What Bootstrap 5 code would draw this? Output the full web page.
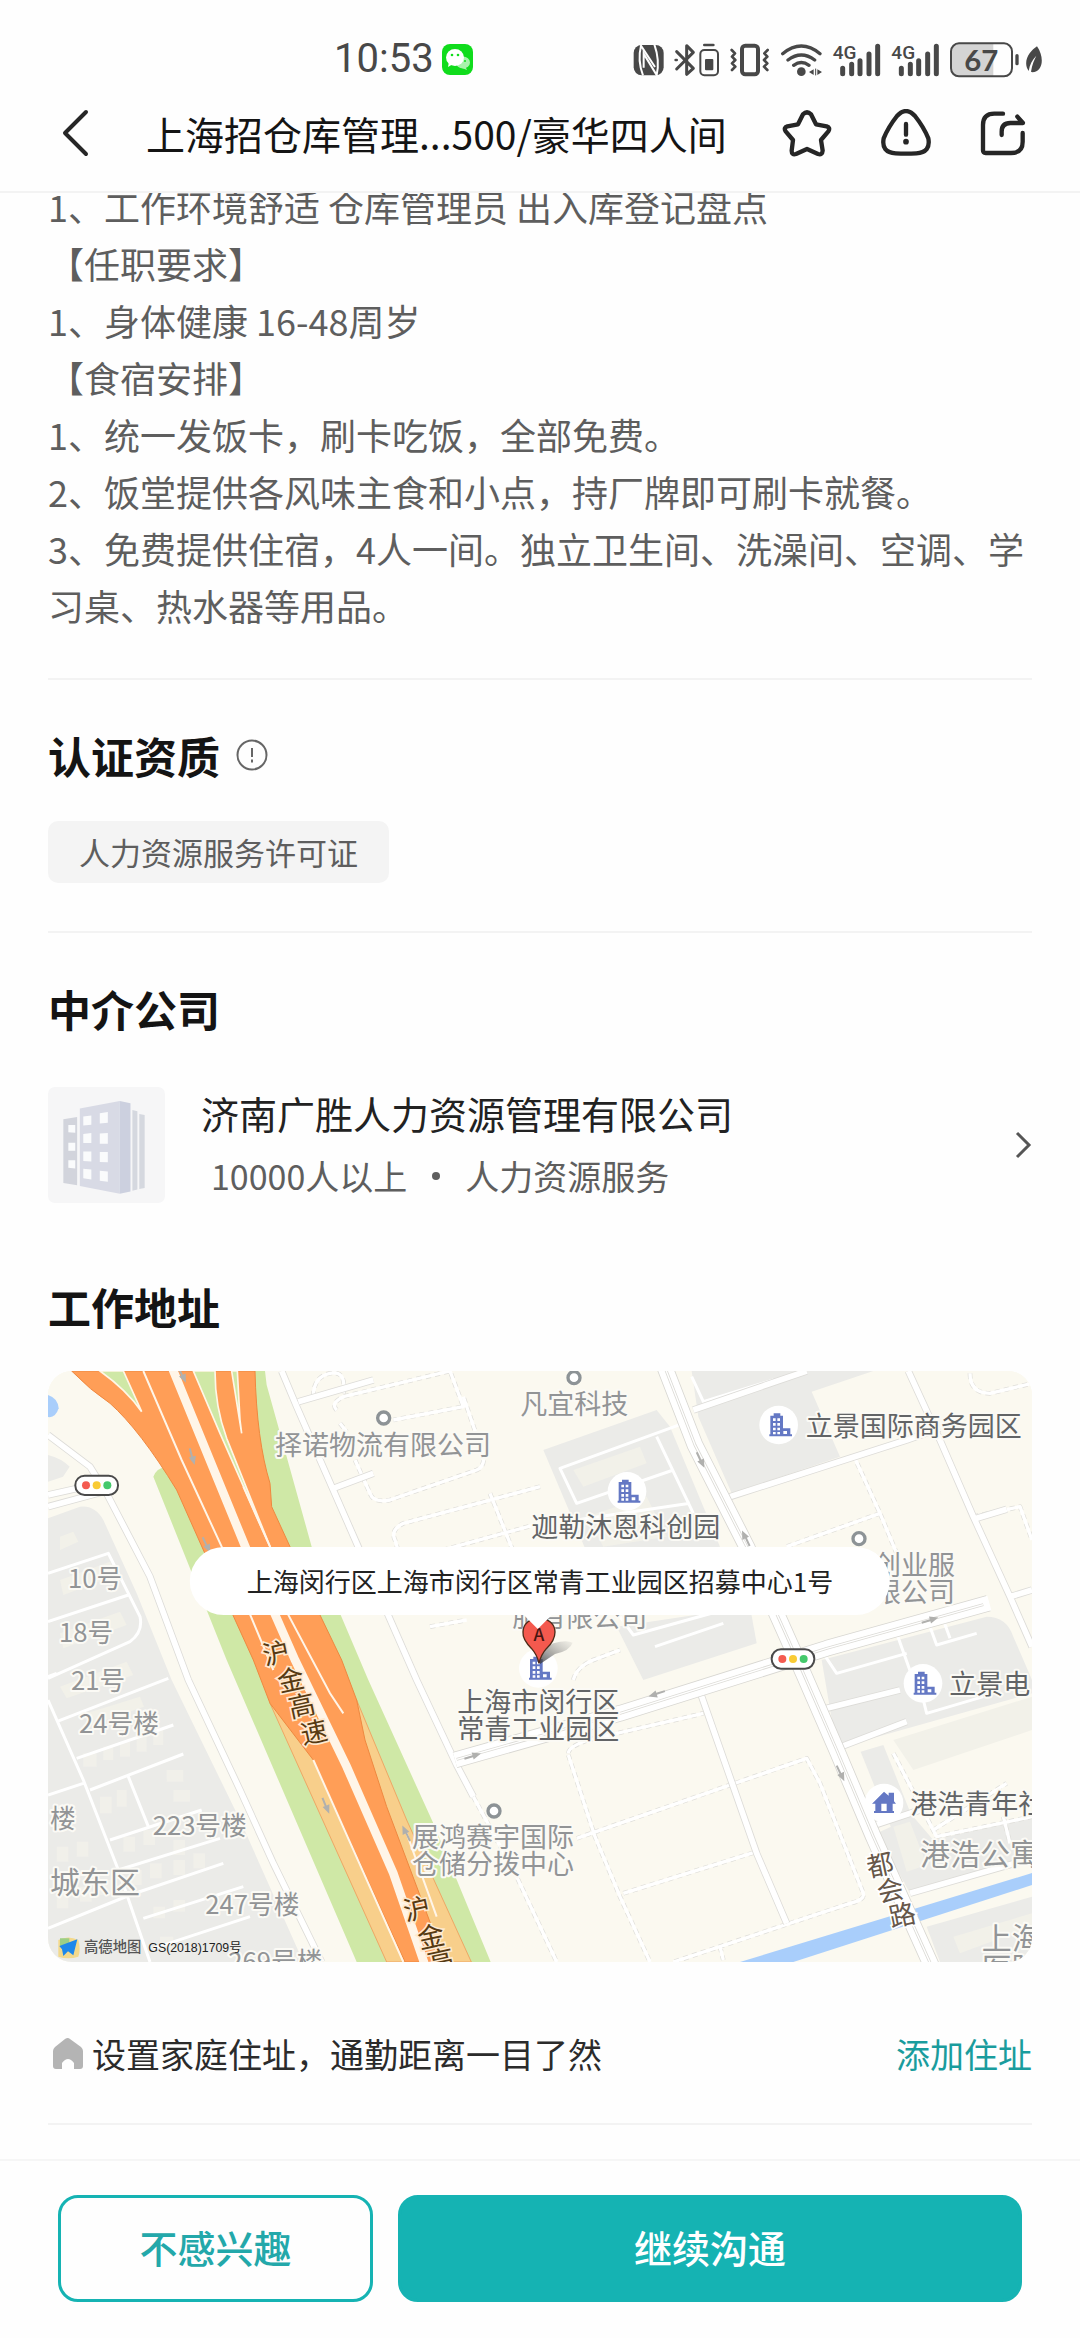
<!DOCTYPE html>
<html lang="zh-CN">
<head>
<meta charset="utf-8">
<meta name="viewport" content="width=device-width, initial-scale=1">
<title>职位详情</title>
<link href="https://cdn.jsdelivr.net/npm/bootstrap@5.3.0/dist/css/bootstrap.min.css" rel="stylesheet">
<style>
:root{--teal:#15b3b3;--ink:#141414;--soft:#5e5e5e;--rule:#f3f3f3}
body{font-family:"Noto Sans CJK SC","Noto Sans",sans-serif;color:var(--ink);background:#fefefe}
svg{display:block;flex:none}
.app-head{background:#fefefe;border-bottom:2px solid var(--rule);z-index:10;height:193px}
.status-row{height:80px;padding:38px 36px 0 334px;color:#484848}
.clock{font-size:40px;line-height:40px;font-family:Roboto,"Noto Sans",sans-serif}
.title-row{height:106px;padding:0 54px 0 60px}
.job-title{font-size:39px;line-height:54px;font-weight:400;margin-left:56px}
.head-icons{gap:49px}
.icon-btn{border:0;background:none;padding:0;color:#262626}
.page-body{padding:0 48px}
.desc{font-size:36px;line-height:57px;color:var(--soft);margin-top:-15px}
.rule{border:0;border-top:2px solid var(--rule);opacity:1;margin:0}
.block-cert{padding:45px 0 48px}
.block-firm{padding-top:45px}
.block-addr{padding-top:73px}
.sec-title{font-size:43px;line-height:60px;font-weight:700}
.tag{font-size:31px;line-height:62px;background:#f4f4f4;color:var(--soft);border-radius:10px;padding:0 31px}
.firm-row{margin-top:49px}
.firm-name{font-size:38px;line-height:56px;color:#222}
.firm-meta{font-size:34px;line-height:50px;color:var(--soft);padding-left:10px;margin-top:10px}
.firm-text{margin:-4px 0 0 36px}
.sep-dot{width:8px;height:8px;border-radius:50%;background:var(--soft);margin:0 25px}
.map-box{border-radius:24px;overflow:hidden;background:#faf8f0;margin-top:35px}
.bubble{left:50%;top:176px;transform:translateX(-50%);background:#fff;border-radius:34px;padding:0 57px;font-size:26px;line-height:68px;color:#222;white-space:nowrap}
.bubble::after{content:"";position:absolute;left:50%;bottom:-14px;margin-left:-17px;border:solid transparent;border-width:15px 15px 0;border-top-color:#fff}
.commute{font-size:34px;line-height:51px;color:#2b2b2b;padding:66px 0 44px}
.commute a{color:#1a9c9d}
.foot{background:#fefefe;border-top:2px solid #f6f6f6;padding:34px 58px 36px;gap:25px}
.foot .btn{height:107px;border-radius:20px;font-size:38px;font-weight:500;padding:0 0 4px;border:3px solid var(--teal)}
.btn-line{color:#23a8aa;flex:1 1 0}
.btn-fill{color:#fff;background:var(--teal);flex:2 1 0}
.lb{font-size:81px;fill:#929496;stroke:#fbfaf5;stroke-width:12px;paint-order:stroke;stroke-linejoin:round}
.lb-num{font-size:77px}
.lb-area{font-size:90px}
.dk{fill:#626466}
.hw{font-size:80px;fill:#573a12;stroke:#ffe9cf;stroke-width:10px;paint-order:stroke;text-anchor:middle}
.st{fill:#66574a;stroke:#fff}
</style>
</head>
<body class="d-flex flex-column min-vh-100">
<header class="app-head sticky-top">
  <div class="status-row d-flex align-items-center">
    <span class="clock">10:53</span>
    <svg class="ms-2" width="31" height="31" viewBox="0 0 31 31"><rect width="31" height="31" rx="8" fill="#10dc1c"/><ellipse cx="21" cy="18.500" rx="7" ry="6" fill="#a9f2ac"/><path d="M23 22l2 4-5-2z" fill="#a9f2ac"/><ellipse cx="13" cy="13.500" rx="9" ry="8.500" fill="#fff"/><path d="M7 18l-1 5 5-3z" fill="#fff"/><circle cx="10" cy="11" r="1.300" fill="#10dc1c"/><circle cx="16" cy="11" r="1.300" fill="#10dc1c"/><circle cx="23" cy="17" r="1" fill="#10dc1c"/></svg>
    <svg class="ms-auto" width="412" height="37" viewBox="96 60 1236 111" fill="none" stroke="#484848" stroke-linecap="round" stroke-linejoin="round">
      <rect x="101" y="72" width="90" height="91" rx="24" fill="#484848" stroke="none"/>
      <path d="M129 163Q112 118 123 74L165 138M163 70Q180 118 170 162L131 98V140" stroke="#fefefe" stroke-width="6" stroke-linejoin="miter" stroke-linecap="butt"/>
      <path d="M230 92l50 50-20 18V74l20 20-50 50" stroke-width="9"/><path d="M227 117h3" stroke-width="8"/>
      <path d="M313 72h27" stroke-width="8" /><rect x="301" y="87" width="53" height="76" rx="12" stroke-width="6"/><rect x="315" y="114" width="25" height="34" rx="3" fill="#484848" stroke="none"/>
      <rect x="426" y="74" width="48" height="86" rx="10" stroke-width="12"/><path d="M395 87l10 10-9 10 10 10-10 10 10 10-10 10M503 87l-10 10 9 10-10 10 10 10-10 10 10 10" stroke-width="8"/>
      <path d="M548 98q56-46 112 0M564 117q40-30 80 0M581 133q23-17 46 0" stroke-width="10"/><circle cx="604" cy="152" r="13" fill="#484848" stroke="none"/><path d="M641 145v17l-14-9zM652 145v17l14-9z" fill="#484848" stroke="none"/><path d="M647 144v18" stroke-width="3"/>
      <path d="M728 142v16M755 130v28M780 119v39M807 99v59M833 76v82" stroke-width="15"/>
      <path d="M904 142v16M931 130v28M956 119v39M983 99v59M1009 76v82" stroke-width="15"/>
      <g fill="#484848" stroke="none" font-family="Roboto,sans-serif" font-weight="500"><text x="698" y="114" font-size="57">4G</text><text x="874" y="114" font-size="57">4G</text></g>
      <path d="M1180 69H1076q-22 0-22 22v52q0 22 22 22h104z" fill="#d4d4d4" stroke="none"/><rect x="1053" y="67" width="183" height="99" rx="24" stroke-width="6"/><path d="M1251 104v24" stroke-width="10"/>
      <text x="1144" y="149" font-size="88" text-anchor="middle" fill="#484848" stroke="none" font-family="Lato,sans-serif" font-weight="700">67</text>
      <path d="M1311 76c24 34 17 78-14 78l-4-2c3-22 11-38 16-48-12 12-20 27-23 46-20-30 4-60 25-74z" fill="#484848" stroke="none"/>
    </svg>
  </div>
  <div class="title-row d-flex align-items-center">
    <button class="icon-btn" aria-label="返回"><svg width="30" height="48" viewBox="0 0 30 48" fill="none" stroke="currentColor" stroke-width="4" stroke-linecap="round" stroke-linejoin="round"><path d="M26 3L5 24l21 21"/></svg></button>
    <h1 class="job-title mb-0 text-nowrap">上海招仓库管理...500/豪华四人间</h1>
    <div class="head-icons d-flex align-items-center ms-auto">
      <button class="icon-btn" aria-label="收藏"><svg width="50" height="48" viewBox="550 267 150 144" fill="none" stroke="currentColor" stroke-width="13" stroke-linejoin="round"><path d="M613 283q12-12 24 0l15 30 32 6q12 4 5 15l-22 26 5 32q-1 14-14 10l-33-15-33 15q-13 4-13-10l4-32-22-26q-7-11 5-15l32-6z"/></svg></button>
      <button class="icon-btn" aria-label="举报"><svg width="50" height="48" viewBox="844 265 150 144" fill="none" stroke="currentColor" stroke-width="13" stroke-linecap="round"><path d="M892 286q27-30 54 0 26 33 40 67 8 42-36 45-31 2-62 0-44-3-36-45 14-34 40-67z"/><path d="M919 310v32" /><circle cx="919" cy="363" r="8.500" fill="currentColor" stroke="none"/></svg></button>
      <button class="icon-btn" aria-label="分享"><svg width="46" height="48" viewBox="1141 265 138 144" fill="none" stroke="currentColor" stroke-width="13" stroke-linecap="round" stroke-linejoin="round"><path d="M1210 279h-26q-34 0-34 34v76q0 8 8 8h76q35 0 35-34v-26"/><path d="M1206 343v-10q0-26 26-26h38l-17-19"/></svg></button>
    </div>
  </div>
</header>

<main class="page-body flex-grow-1">
  <div class="desc">
    1、工作环境舒适 仓库管理员 出入库登记盘点<br>【任职要求】<br>1、身体健康 16-48周岁<br>【食宿安排】<br>1、统一发饭卡，刷卡吃饭，全部免费。<br>2、饭堂提供各风味主食和小点，持厂牌即可刷卡就餐。<br>3、免费提供住宿，4人一间。独立卫生间、洗澡间、空调、学习桌、热水器等用品。
  </div>
  <hr class="rule" style="margin-top:44px">
  <section class="block-cert">
    <div class="d-flex align-items-center">
      <h2 class="sec-title mb-0">认证资质</h2>
      <svg class="ms-3" width="32" height="32" viewBox="0 0 32 32" fill="none" stroke="#666" stroke-width="2"><circle cx="16" cy="16" r="14.500"/><path d="M16 9v9M16 20.500v3"/></svg>
    </div>
    <div class="d-flex" style="margin-top:36px"><span class="tag">人力资源服务许可证</span></div>
  </section>
  <hr class="rule">
  <section class="block-firm">
    <h2 class="sec-title mb-0">中介公司</h2>
    <a href="#" class="firm-row d-flex align-items-center text-decoration-none">
      <svg width="117" height="116" viewBox="125 1116 305 302"><rect x="125" y="1116" width="305" height="302" rx="18" fill="#f6f6f7"/><path d="M165 1200l36-6v178l-36-6z" fill="#d2d4dc"/><path d="M208 1172l104-20v242l-104-20z" fill="#d8dae5"/><path d="M312 1152l28 6v230l-28 6z" fill="#ccd0df"/><path d="M345 1176l13 3v204l-13 3zM363 1186l14 3v190l-14 3z" fill="#d5d8df"/><path d="M178 1215l18 0v20l-18-1zM178 1261h18v21h-18zM178 1307h18v21l-18-2zM217 1193l21-3v24l-21 2zM217 1238l21-2v26h-21zM217 1284h21v26l-21-1zM217 1329l21 2v26l-21-3zM260 1184l21-3v28l-21 2zM260 1237l21-1v28h-21zM260 1285h21v27l-21-1zM260 1334l21 2v27l-21-3z" fill="#fafbfc"/></svg>
      <div class="firm-text">
        <div class="firm-name">济南广胜人力资源管理有限公司</div>
        <div class="firm-meta d-flex align-items-center"><span>10000人以上</span><span class="sep-dot"></span><span>人力资源服务</span></div>
      </div>
      <svg class="ms-auto" width="18" height="28" viewBox="0 0 18 28" fill="none" stroke="#555" stroke-width="3"><path d="M3 2l12 12L3 26"/></svg>
    </a>
  </section>
  <section class="block-addr">
    <h2 class="sec-title mb-0">工作地址</h2>
    <div class="map-box position-relative">
      <svg width="100%" viewBox="24 33 2952 1773" role="img" aria-label="地图">
        <defs>
          <g id="block"><circle r="58" fill="#fff"/><path d="M-25-28h10v-7h20v7h8v38h22v18h5v6h-68v-6h3z" fill="#6478c4"/><path d="M-17-20h8v8h-8zM-4-20h8v8h-8zM-17-6h8v8h-8zM-4-6h8v8h-8zM-17 8h8v8h-8zM-4 8h8v8h-8zM-17 21h8v7h-8zM-4 21h8v7h-8zM14 18h11v9H14z" fill="#fff"/></g>
          <g id="lamp"><rect x="-64" y="-29" width="128" height="58" rx="28" fill="#fff" stroke="#4a4a4a" stroke-width="6"/><circle cx="-32" r="12" fill="#f45b50"/><circle r="12" fill="#f9cb35"/><circle cx="32" r="12" fill="#45c96c"/></g>
          <circle id="poi" r="18" fill="#fff" stroke="#8d9396" stroke-width="10"/>
          <path id="arw" d="M-26-2h26v-9l26 11-26 11v-7h-26z" fill="#b0b0ae"/>
          <linearGradient id="shade" x1="0" y1="1" x2="1" y2="0"><stop offset="0" stop-color="#333" stop-opacity=".8"/><stop offset="1" stop-color="#999" stop-opacity=".1"/></linearGradient>
          <g id="lanes" fill="none" stroke-linejoin="round">
            <path d="M24 225L150 320 200 400 330 650 445 960 600 1290 700 1510 845 1806"/>
            <path d="M725 33L770 140 950 550 1130 960 1250 1215 1300 1310"/>
            <path d="M2605 33L2700 240 2800 470 2910 710 2976 860M2910 710L2976 690"/>
            <path d="M24 405L180 370M24 440L190 395"/>
            <path d="M1960 150L2300 33M2070 410L2600 240 2700 205M2800 478L2900 448"/>
            <path d="M775 125L1000 60M880 385L1000 340"/>
            <path d="M2360 1045L2580 990M2390 1165L2600 1085M2490 1400L2640 1350M2610 1600L2976 1495"/>
            <path d="M1980 995L2080 1280 2150 1480 2240 1690"/>
          </g>
          <g id="paths" fill="none" stroke-linejoin="round">
            <path d="M1300 1310L1430 1550 1550 1806M820 110q0-60 50-70t40 60M890 150q-20-20 20-40L1230 33 1270 140 1060 180M900 190L920 215M945 300L990 400q10 30 60 20L1310 330q25-10 20-45L1270 110"/>
            <path d="M1500 380L1090 490q-40 20-25 50L1080 590M1350 400L1430 600 1480 800M1100 600L1500 490M1170 800L1280 780"/>
            <path d="M1585 1180q0-20 60-40L1990 1060M1585 1185L1665 1430 1740 1610 1830 1806M1610 1435L2300 1195 2340 1270 2470 1600q5 20-40 30L1900 1806M1750 1600L2150 1475M2040 1760L2050 1800"/>
            <path d="M2440 285L2520 460 2570 580M2520 460L2240 560M2560 1180L2690 1430 2976 1370M2680 1410L2900 1270M2890 1370L2910 1450M2800 470L2940 440 2976 540M2790 40q0 60 60 60L2976 70M1600 960q10-40 60-60L1740 870"/>
          </g>
        </defs>
        <rect x="24" y="33" width="2952" height="1773" fill="#fbf9f0"/>
        <g fill="#ebebe8">
          <path d="M24 475L120 440q45-5 70 40L290 700 395 960 600 1380 790 1806H24zM24 285q40 10 65 35l-20 30-45 15z"/>
          <path d="M1955 33H2500L2315 95 2400 290 2075 400 1975 170z"/><path d="M1510 270L1850 150 1890 200 2040 560 1650 600z"/><path d="M1730 800L2130 740 2150 850 1810 960z"/>
          <path d="M2345 900L2840 770q60 0 80 60L2976 960V1000L2390 1165z"/><path d="M2462 1175L2530 1155 2620 1380 2560 1420z"/><path d="M2510 1420L2620 1370 2680 1440 2976 1370V1500L2610 1600z"/><path d="M2660 1700L2976 1610V1806H2700z"/>
        </g>
        <g fill="#f2f1e9"><path d="M2560 1140L2976 1010V1110L2620 1230z"/><path d="M2740 1730L2976 1660V1700L2760 1780z"/><path d="M2560 1400l50-15 50 130-60 20z"/>
          <path d="M60 530l40-15 15 30-55 25zM60 660l150-55 20 40-160 60zM60 820l180-65 20 40-190 70zM60 980l200-75 20 40-200 70zM140 1060l160-50 12 30-160 55z"/>
          <path d="M1600 330l200-70 20 50-190 70zM1640 470l180-60 60 120-190 30z"/></g>
        <path d="M130 1180h40v40h-40zM190 1160h30v40h-30zM240 1145h30v45h-30zM290 1130h30v45h-30zM340 1110h30v45h-30zM180 1310h35v50h-35zM230 1290h30v50h-30zM380 1230h50v35h-50zM400 1290h50v35h-50zM250 1430h35v45h-35zM310 1410h35v45h-35zM400 1440h35v45h-35zM50 1460h35v45h-35zM110 1445h35v45h-35zM270 1530h35v45h-35zM330 1510h35v45h-35zM400 1500h35v45h-35zM460 1480h35v45h-35zM50 1600h35v45h-35zM120 1580h35v45h-35zM180 1560h35v45h-35zM340 1640h35v35h-35zM400 1620h35v35h-35zM560 1620h50v35h-50zM360 1730h40v40h-40z" fill="#f1f0ea"/>
        <path d="M24 105q30 10 32 40-10 30-32 26z" fill="#a9cefb"/>
        <path d="M2100 1806L2976 1539V1575L2260 1806z" fill="#a9cefb"/>
        <g stroke="#fff" stroke-width="9" fill="none" stroke-linejoin="round">
          <path d="M24 640L205 580 300 770q10 45-30 75L24 955M24 785L265 705M24 950L50 940M50 1085L385 955M24 1020L130 1260 235 1530 330 1806M110 1195L400 1095M150 1290L430 1182M265 1250L325 1400M24 1305L130 1270M210 1440L485 1350M235 1530L540 1435M24 1705L270 1605 550 1510M310 1675L610 1580M340 1765L630 1670"/>
          <path d="M1930 190L1560 325 1610 430 1900 330M1850 230L1960 460M1610 480L1950 430M1955 50L1990 125 2200 60M1740 770L1780 825 2050 750M1845 860L2050 790M2570 820L2620 960M2670 800L2690 855 2810 820M2710 780L2730 835M2350 880L2390 940 2600 880M2650 1020L2660 1060 2830 1010"/>
        </g>
        <use href="#paths" stroke="#dfded9" stroke-width="14" stroke-dasharray="16 12"/><use href="#paths" stroke="#fff" stroke-width="10"/>
        <use href="#lanes" stroke="#dddcd8" stroke-width="22"/><use href="#lanes" stroke="#fff" stroke-width="17"/>
        <g fill="none" stroke-linejoin="round">
          <path d="M2845 730L2360 865 1740 1060 1245 1200M1870 10L1965 255 2120 560 2290 940 2390 1170 2500 1430 2680 1830" stroke="#d8d7d2" stroke-width="50"/>
          <path d="M2848 729L2360 865 1740 1060 1245 1200M1870 10L1965 255 2120 560 2290 940 2390 1170 2500 1430 2680 1830" stroke="#fff" stroke-width="45"/>
          <path d="M2830 734L2360 865 1740 1060 1250 1198M1870 10L1965 255 2120 560 2290 940 2390 1170 2500 1430 2680 1830" stroke="#dcdbd6" stroke-width="9"/>
          <path d="M2830 734L2360 865 1740 1060 1250 1198M1870 10L1965 255 2120 560 2290 940 2390 1170 2500 1430 2680 1830" stroke="#fff" stroke-width="4"/>
        </g>
        <path d="M180 33H675L680 75 740 290 815 560 985 960 1180 1390 1352 1806H950L560 900 340 350q10-25 35-28L310 160z" fill="#cfe8a6"/>
        <path d="M690 1030L1040 1806H1294L1100 1380 950 1020z" fill="#f8cf8b" stroke="#eea765" stroke-width="3"/>
        <path d="M95 33Q150 90 210 130 300 210 410 390L490 570 640 900 690 1030 820 1200 1095 1806H1215L1040 1340 975 1140 950 1020 905 900 840 765 750 560 695 440 690 370Q650 240 645 33H180z" fill="#ff9e57" stroke="#ee8840" stroke-width="3"/>
        <g fill="#cfe8a6" stroke="#fff6e6" stroke-width="5"><path d="M180 33H250L305 155Q260 90 180 33z"/><path d="M460 33H525Q525 140 560 235L690 560 540 220z"/><path d="M575 33H592L600 180 605 220z"/></g>
        <g fill="none" stroke="#fff5e8"><path d="M395 20L620 570 765 900 920 1220 1060 1540 1160 1830" stroke-width="26"/><path d="M310 33L425 300 545 560 700 930M610 380L690 560 745 765 870 1000 910 1060M820 1200L1090 1806M1100 1420L1190 1670" stroke-width="6"/></g>
        <use href="#arw" transform="translate(427 45) rotate(65)"/><use href="#arw" transform="translate(457 290) rotate(75)"/><use href="#arw" transform="translate(500 555) rotate(65)"/><use href="#arw" transform="translate(858 1337) rotate(68)"/><use href="#arw" transform="translate(1098 1420) rotate(-115)"/>
        <use href="#arw" transform="translate(1982 300) rotate(65)"/><use href="#arw" transform="translate(2117 535) rotate(-115)"/><use href="#arw" transform="translate(2402 1240) rotate(65)"/><use href="#arw" transform="translate(1850 1002) rotate(163)"/><use href="#arw" transform="translate(2670 780) rotate(-16)"/><use href="#arw" transform="translate(1298 1188) rotate(-16)"/>
        <use href="#lamp" x="170" y="376"/><use href="#lamp" x="2259" y="897"/>
        <use href="#poi" x="1031" y="174"/><use href="#poi" x="1602" y="53"/><use href="#poi" x="2457" y="536"/><use href="#poi" x="1362" y="1353"/>
        <use href="#block" x="2216" y="195"/><use href="#block" x="1761" y="394"/><use href="#block" x="2649" y="970"/><use href="#block" x="1495" y="925"/>
        <circle cx="2532" cy="1329" r="58" fill="#fff"/><path d="M2496 1331l36-36 14 12v-9h16v26l6 7h-10v22h4v6h-60v-6h4v-22zM2524 1353h16v-22h-16z" fill="#6478c4" fill-rule="evenodd"/>
        <g class="lb">
          <text x="705" y="284">择诺物流有限公司</text><text x="1441" y="162">凡宜科技</text><text x="1417" y="802">服有限公司</text><text x="2502" y="645">创业服</text><text x="2502" y="726">限公司</text>
          <text x="1116" y="1460">展鸿赛宇国际</text><text x="1116" y="1541">仓储分拨中心</text>
          <g class="lb-num"><text x="84" y="684">10号</text><text x="57" y="846">18号</text><text x="93" y="990">21号</text><text x="117" y="1120">24号楼</text><text x="30" y="1404">楼</text><text x="338" y="1426">223号楼</text><text x="496" y="1661">247号楼</text><text x="565" y="1834">269号楼</text></g>
          <g class="lb-area"><text x="30" y="1599">城东区</text><text x="2640" y="1515">港浩公寓</text><text x="2825" y="1766">上海</text><text x="2825" y="1856">医院</text></g>
          <g class="dk"><text x="2297" y="227">立景国际商务园区</text><text x="1474" y="530">迦勒沐恩科创园</text><text x="1252" y="1057">上海市闵行区</text><text x="1252" y="1138">常青工业园区</text><text x="2728" y="1001">立景电</text><text x="2611" y="1361">港浩青年社</text></g>
        </g>
        <g class="hw">
          <text transform="translate(708 880) rotate(-12)" y="29">沪</text><text transform="translate(752 960) rotate(-12)" y="29">金</text><text transform="translate(785 1037) rotate(-12)" y="29">高</text><text transform="translate(822 1117) rotate(-12)" y="29">速</text>
          <text transform="translate(1130 1647) rotate(-12)" y="29">沪</text><text transform="translate(1173 1730) rotate(-12)" y="29">金</text><text transform="translate(1202 1802) rotate(-12)" y="29">高</text>
          <g class="st"><text transform="translate(2520 1515) rotate(-12)" y="29">都</text><text transform="translate(2551 1591) rotate(-12)" y="29">会</text><text transform="translate(2587 1665) rotate(-12)" y="29">路</text></g>
        </g>
        <path d="M1500 912Q1500 870 1540 850 1580 838 1598 848 1590 872 1545 882z" fill="url(#shade)"/>
        <path d="M1497 910q-6-26-22-44-28-28-26-50a48 42 0 0 1 96 0q0 26-26 50-16 18-22 44z" fill="#f4594e" stroke="#4d2a18" stroke-width="4"/><text x="1497" y="842" text-anchor="middle" font-size="52" font-weight="500" fill="#461512">A</text>
        <path d="M55 1740q30-15 60 0 8 30 0 50-30 10-60 0z" fill="#f3d98c"/><path d="M60 1735h28v22H60z" fill="#9ccf86"/><path d="M58 1758l54-20-12 48-16-12-14 14-4-20z" fill="#1e88ea"/>
        <text x="132" y="1777" font-size="43" font-weight="500" fill="#555">高德地图</text><text x="325" y="1776" font-size="37" fill="#222" style="font-family:'Liberation Sans','Noto Sans CJK SC',sans-serif">GS(2018)1709号</text>
      </svg>
      <div class="bubble position-absolute">上海闵行区上海市闵行区常青工业园区招募中心1号</div>
    </div>
  </section>
  <div class="commute d-flex align-items-center">
    <svg width="40" height="32" viewBox="0 0 40 32"><path d="M17 1q3-2 5 0l11 8q2 2 2 4v15q0 3-3 3h-6v-6q-6-8-12 0v6H8q-3 0-3-3V13q0-2 2-4z" fill="#b4b4b4"/></svg>
    <span class="ms-1">设置家庭住址，通勤距离一目了然</span>
    <a href="#" class="ms-auto text-decoration-none">添加住址</a>
  </div>
  <hr class="rule">
</main>

<footer class="foot d-flex sticky-bottom">
  <button class="btn btn-line">不感兴趣</button>
  <button class="btn btn-fill">继续沟通</button>
</footer>
<script src="https://cdn.jsdelivr.net/npm/bootstrap@5.3.0/dist/js/bootstrap.bundle.min.js"></script>
</body>
</html>
